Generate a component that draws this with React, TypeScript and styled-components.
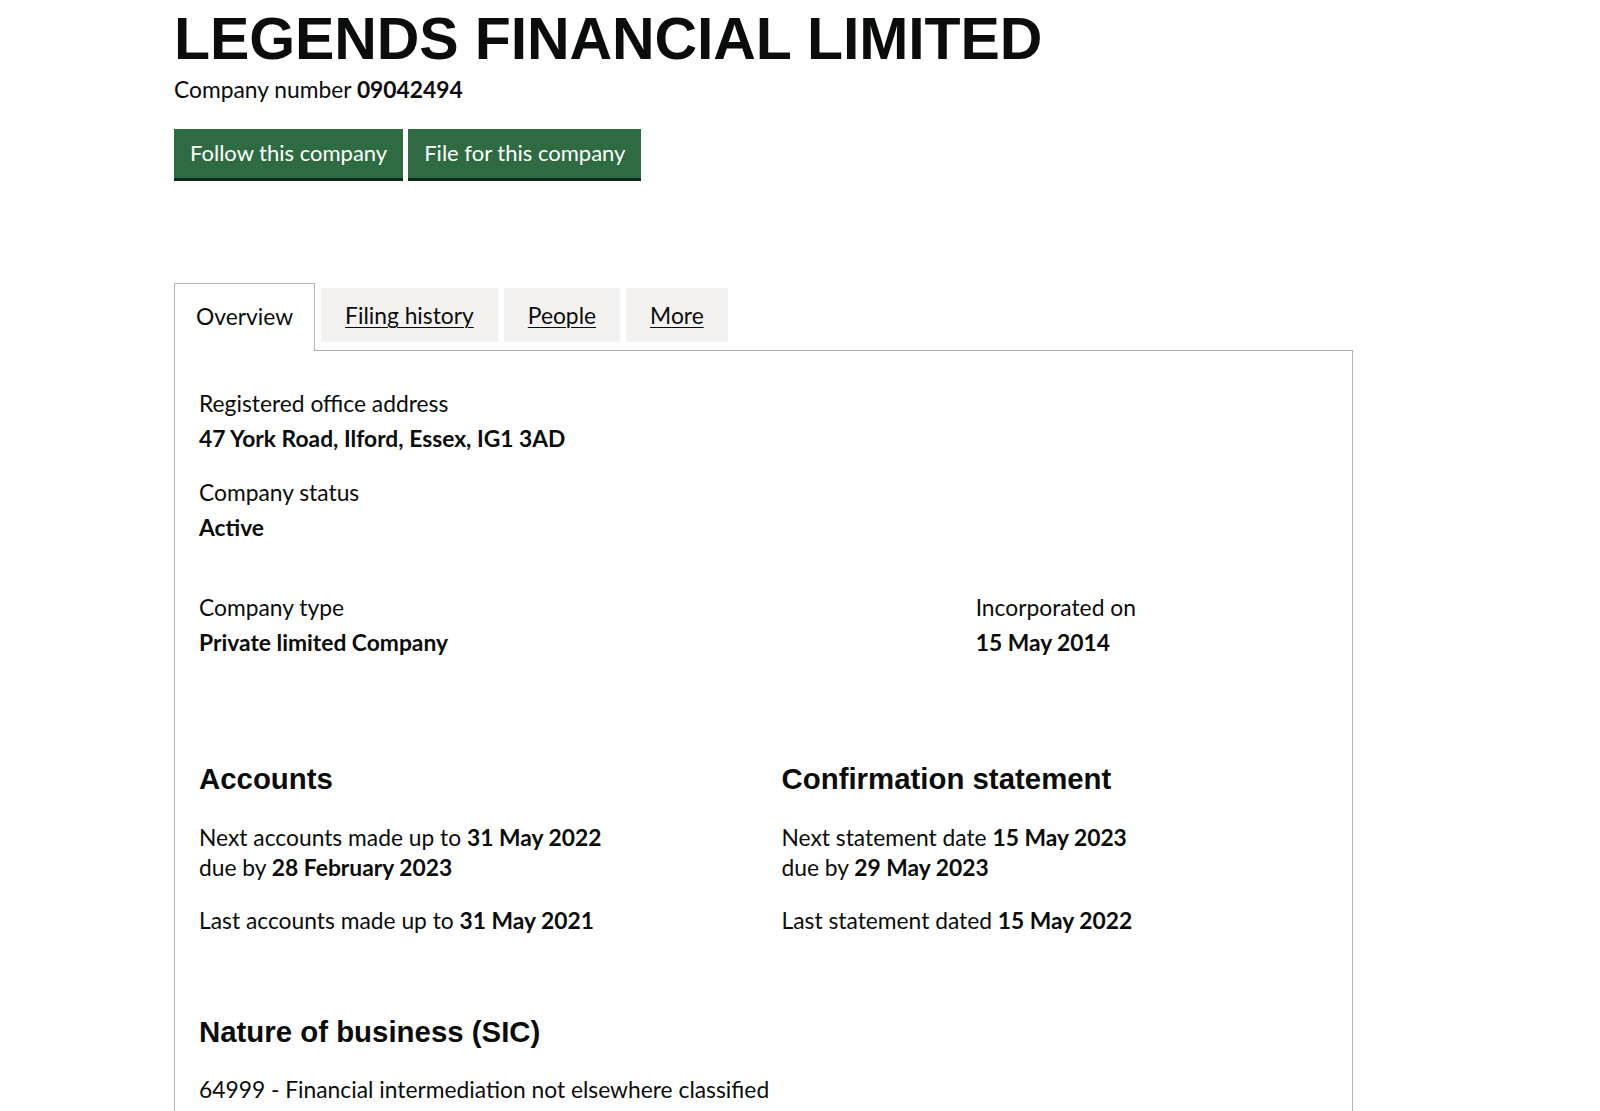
import React from 'react';
import styled, { createGlobalStyle } from 'styled-components';

const GlobalStyle = createGlobalStyle`
  html, body {
    margin: 0;
    padding: 0;
    background: #ffffff;
  }
  body {
    font-family: Lato, "Liberation Sans", Arial, sans-serif;
    color: #0b0c0c;
    -webkit-font-smoothing: antialiased;
  }
`;

type Fraction = 'half' | 'two-thirds' | 'one-third';

const widths: Record<Fraction, string> = {
  half: '50%',
  'two-thirds': '66.6667%',
  'one-third': '33.3333%',
};

export default function App() {
  return (
    <>
      <GlobalStyle />
      <Page>
        <Title>LEGENDS FINANCIAL LIMITED</Title>
        <CompanyNumber>
          Company number <strong>09042494</strong>
        </CompanyNumber>
        <Actions>
          <Button href="#">Follow this company</Button>
          <Button href="#">File for this company</Button>
        </Actions>

        <Tabs>
          <TabList>
            <Tab selected>Overview</Tab>
            <Tab>
              <TabLink href="#">Filing history</TabLink>
            </Tab>
            <Tab>
              <TabLink href="#">People</TabLink>
            </Tab>
            <Tab>
              <TabLink href="#">More</TabLink>
            </Tab>
          </TabList>

          <Panel>
            <Label>Registered office address</Label>
            <Value>47 York Road, Ilford, Essex, IG1 3AD</Value>

            <Label gap={24}>Company status</Label>
            <Value>Active</Value>

            <Row gap={50}>
              <Column size="two-thirds">
                <Label>Company type</Label>
                <Value>Private limited Company</Value>
              </Column>
              <Column size="one-third">
                <Label>Incorporated on</Label>
                <Value>15 May 2014</Value>
              </Column>
            </Row>

            <Row gap={107}>
              <Column size="half">
                <Heading>Accounts</Heading>
                <Para gap={28}>
                  Next accounts made up to <strong>31 May 2022</strong>
                  <br />
                  due by <strong>28 February 2023</strong>
                </Para>
                <Para gap={23}>
                  Last accounts made up to <strong>31 May 2021</strong>
                </Para>
              </Column>
              <Column size="half">
                <Heading>Confirmation statement</Heading>
                <Para gap={28}>
                  Next statement date <strong>15 May 2023</strong>
                  <br />
                  due by <strong>29 May 2023</strong>
                </Para>
                <Para gap={23}>
                  Last statement dated <strong>15 May 2022</strong>
                </Para>
              </Column>
            </Row>

            <Heading gap={82}>Nature of business (SIC)</Heading>
            <Para gap={27}>64999 - Financial intermediation not elsewhere classified</Para>
          </Panel>
        </Tabs>
      </Page>
    </>
  );
}

const Page = styled.main`
  padding: 10px 0 0 174px;
  width: 1179px;
`;

const Title = styled.h1`
  margin: 0;
  font-family: "Liberation Sans", Arial, sans-serif;
  font-size: 59px;
  line-height: 59px;
  font-weight: 700;
  letter-spacing: -0.1px;
`;

const CompanyNumber = styled.p`
  margin: 5px 0 0;
  font-size: 22.8px;
  line-height: 30px;

  strong {
    font-weight: 700;
  }
`;

const Actions = styled.div`
  display: flex;
  gap: 5px;
  margin-top: 25px;
`;

const Button = styled.a`
  display: inline-block;
  box-sizing: border-box;
  height: 49px;
  padding: 0 14px;
  border: 2px solid transparent;
  background: #2e6b43;
  box-shadow: 0 3px 0 #0f2a18;
  color: #ffffff;
  font-size: 22px;
  line-height: 44px;
  text-decoration: none;
`;

const Tabs = styled.section`
  margin-top: 105px;
`;

const TabList = styled.ul`
  display: flex;
  align-items: flex-start;
  gap: 6px;
  list-style: none;
  margin: 0 0 -1px;
  padding: 0;
`;

const Tab = styled.li<{ selected?: boolean }>`
  position: relative;
  z-index: ${(p) => (p.selected ? 1 : 0)};
  box-sizing: border-box;
  margin-top: ${(p) => (p.selected ? '0' : '5px')};
  padding: ${(p) => (p.selected ? '17px 21px 20px' : '12px 24px')};
  border: ${(p) => (p.selected ? '1px solid #b1b4b6' : '0')};
  border-bottom: 0;
  background: ${(p) => (p.selected ? '#ffffff' : '#f3f2f1')};
  font-size: 22.8px;
  line-height: 30px;
`;

const TabLink = styled.a`
  color: #0b0c0c;
  text-decoration: underline;
  text-decoration-thickness: 1px;
  text-underline-offset: 3px;
`;

const Panel = styled.div`
  border: 1px solid #b1b4b6;
  padding: 37px 24px 60px;
  min-height: 800px;
`;

const Label = styled.div<{ gap?: number }>`
  margin-top: ${(p) => p.gap ?? 0}px;
  font-size: 22.8px;
  line-height: 30px;
`;

const Value = styled.div`
  margin-top: 5px;
  font-size: 22.8px;
  line-height: 30px;
  font-weight: 700;
`;

const Row = styled.div<{ gap?: number }>`
  display: flex;
  margin: ${(p) => p.gap ?? 0}px -18px 0;
`;

const Column = styled.div<{ size: Fraction }>`
  box-sizing: border-box;
  width: ${(p) => widths[p.size]};
  padding: 0 18px;
`;

const Heading = styled.h2<{ gap?: number }>`
  margin: ${(p) => p.gap ?? 0}px 0 0;
  font-family: "Liberation Sans", Arial, sans-serif;
  font-size: 29.4px;
  line-height: 30px;
  font-weight: 700;
`;

const Para = styled.p<{ gap?: number }>`
  margin: ${(p) => p.gap ?? 0}px 0 0;
  font-size: 22.8px;
  line-height: 30px;

  strong {
    font-weight: 700;
  }
`;
